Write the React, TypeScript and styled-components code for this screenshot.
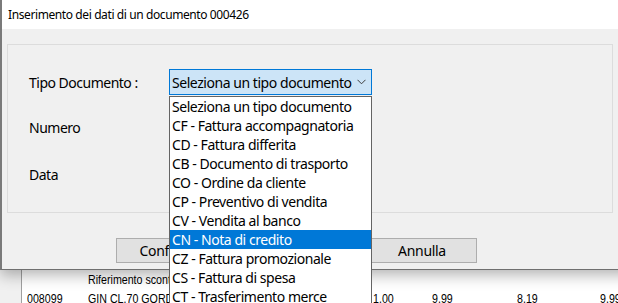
import React from 'react'
import styled, { createGlobalStyle } from 'styled-components'

const GlobalStyle = createGlobalStyle`
  html, body {
    margin: 0;
    padding: 0;
    background: #ffffff;
    overflow: hidden;
  }
  * {
    box-sizing: border-box;
  }
`

const uiFont = `'Noto Sans', 'Open Sans', sans-serif`
const gridFont = `'Liberation Sans', Arial, sans-serif`

const Screen = styled.div`
  position: relative;
  width: 618px;
  height: 303px;
  overflow: hidden;
  background: #ffffff;
  display: flex;
  flex-direction: column;
`

const Dialog = styled.div`
  position: relative;
  z-index: 2;
  width: 640px;
  height: 270px;
  flex-shrink: 0;
  display: flex;
  flex-direction: column;
  background: #f0f0f0;
  border-left: 2px solid #7a7a7a;
  border-bottom: 1px solid #6f6f6f;
  box-shadow: 0 5px 14px rgba(0, 0, 0, 0.3);
  font-family: ${uiFont};
  color: #000000;
`

const TitleBar = styled.div`
  height: 29px;
  flex-shrink: 0;
  background: #ffffff;
  padding-left: 6px;
  display: flex;
  align-items: center;
  font-size: 12px;
  letter-spacing: -0.4px;
`

const Body = styled.div`
  flex: 1;
  padding: 15px 0 0 5px;
  display: flex;
  flex-direction: column;
`

const GroupBox = styled.div`
  width: 606px;
  height: 169px;
  border: 1px solid #dcdcdc;
  padding: 24px 0 0 21px;
  display: flex;
  flex-direction: column;
  gap: 19px;
`

const FieldRow = styled.div`
  height: 26px;
  display: flex;
  align-items: center;

  &:last-child {
    margin-top: 2px;
  }
`

const Label = styled.div`
  width: 140px;
  font-size: 14px;
  letter-spacing: -0.5px;
`

const ComboWrap = styled.div`
  position: relative;
  width: 203px;
  height: 26px;
`

const Combo = styled.div`
  width: 100%;
  height: 100%;
  border: 1px solid #0078d7;
  background: #cce4f7;
  display: flex;
  align-items: center;
  justify-content: space-between;
  padding: 0 5px 0 2px;
  font-size: 14px;
  letter-spacing: -0.45px;
  white-space: nowrap;
`

const Chevron = styled.svg`
  width: 9px;
  height: 6px;
  flex-shrink: 0;
`

const ListBox = styled.div`
  position: absolute;
  top: 27px;
  left: 0;
  width: 203px;
  background: #ffffff;
  border: 1px solid #646464;
  z-index: 5;
`

const ListItem = styled.div<{ $active?: boolean }>`
  height: 19px;
  line-height: 19px;
  padding-left: 2px;
  font-size: 14px;
  letter-spacing: -0.45px;
  white-space: nowrap;
  background: ${(p) => (p.$active ? '#0078d7' : '#ffffff')};
  color: ${(p) => (p.$active ? '#ffffff' : '#000000')};
`

const ButtonRow = styled.div`
  display: flex;
  margin-top: 25px;
  padding-left: 109px;
  gap: 141px;
`

const Button = styled.div`
  width: 110px;
  height: 25px;
  background: #e1e1e1;
  border: 1px solid #adadad;
  display: flex;
  align-items: center;
  justify-content: center;
  font-size: 14px;
  letter-spacing: -0.3px;
`

const DataGrid = styled.div`
  flex: 1;
  display: flex;
  flex-direction: column;
  font-family: ${gridFont};
  font-size: 13px;
  color: #000000;
  background: linear-gradient(to right, #f0f0f0 21px, #a0a0a0 21px, #a0a0a0 22px, #ffffff 22px);
`

const GridRow = styled.div`
  height: 19px;
  display: grid;
  grid-template-columns: 22px 61px 285px 59px 85px 83px 1fr;
  align-items: center;
`

const Cell = styled.div`
  padding-left: 5px;
  white-space: nowrap;
  overflow: hidden;

  & > span {
    display: inline-block;
    transform: scaleX(0.82);
    transform-origin: left center;
  }
`

const tipi = [
  'Seleziona un tipo documento',
  'CF - Fattura accompagnatoria',
  'CD - Fattura differita',
  'CB - Documento di trasporto',
  'CO - Ordine da cliente',
  'CP - Preventivo di vendita',
  'CV - Vendita al banco',
  'CN - Nota di credito',
  'CZ - Fattura promozionale',
  'CS - Fattura di spesa',
  'CT - Trasferimento merce',
  'CR - Reso da cliente',
]

const righe = [
  ['', 'Riferimento sconto', '', '', '', ''],
  ['008099', "GIN CL.70 GORDON'S", '1,00', '9,99', '8,19', '9,99'],
]

const App: React.FC = () => {
  return (
    <Screen>
      <GlobalStyle />
      <Dialog>
        <TitleBar>Inserimento dei dati di un documento 000426</TitleBar>
        <Body>
          <GroupBox>
            <FieldRow>
              <Label>Tipo Documento :</Label>
              <ComboWrap>
                <Combo>
                  <span>Seleziona un tipo documento</span>
                  <Chevron viewBox="0 0 9 6">
                    <path d="M0.5 0.8 L4.5 4.8 L8.5 0.8" fill="none" stroke="#3c3c3c" strokeWidth="1" />
                  </Chevron>
                </Combo>
                <ListBox>
                  {tipi.map((t) => (
                    <ListItem key={t} $active={t.startsWith('CN')}>
                      {t}
                    </ListItem>
                  ))}
                </ListBox>
              </ComboWrap>
            </FieldRow>
            <FieldRow>
              <Label>Numero</Label>
            </FieldRow>
            <FieldRow>
              <Label>Data</Label>
            </FieldRow>
          </GroupBox>
          <ButtonRow>
            <Button>Conferma</Button>
            <Button>Annulla</Button>
          </ButtonRow>
        </Body>
      </Dialog>
      <DataGrid>
        {righe.map((r, i) => (
          <GridRow key={i}>
            <span />
            {r.map((c, j) => (
              <Cell key={j}>
                <span>{c}</span>
              </Cell>
            ))}
          </GridRow>
        ))}
      </DataGrid>
    </Screen>
  )
}

export default App
